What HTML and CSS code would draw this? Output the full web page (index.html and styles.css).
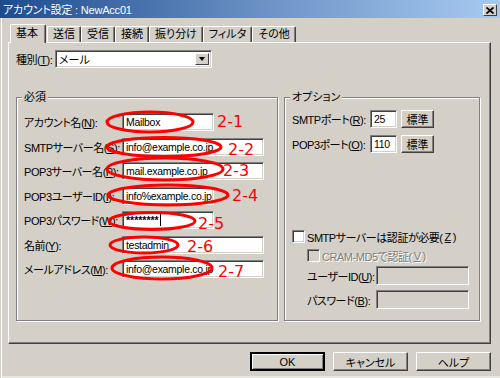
FILE: index.html
```html
<!doctype html>
<html lang="ja">
  <head>
    <meta charset="UTF-8" />
    <title>アカウント設定 : NewAcc01</title>
    <link rel="stylesheet" href="styles.css">
  </head>
  <body>
    <div class="window">
      <div class="titlebar">
        <span class="title">アカウント設定 : NewAcc01</span>
        <span class="close-btn">
          <svg width="8" height="7" viewBox="0 0 8 7"><path d="M0.5 0.5L7.5 6.5M7.5 0.5L0.5 6.5" stroke="#000" stroke-width="1.7" fill="none"/></svg>
        </span>
      </div>

      <div class="content">
        <div class="tabs">
          <span class="tab active">基本</span>
          <span class="tab">送信</span>
          <span class="tab">受信</span>
          <span class="tab">接続</span>
          <span class="tab">振り分け</span>
          <span class="tab">フィルタ</span>
          <span class="tab">その他</span>
        </div>

        <div class="panel">
          <div class="kind-row">
            <span class="kind-label">種別(<u>T</u>):</span>
            <div class="select">
              <span class="select-text">メール</span>
              <span class="select-btn"><span class="tri"></span></span>
            </div>
          </div>

          <div class="groups">
            <div class="group group-required">
              <span class="legend">必須</span>
              <div class="fields">
                <span class="lbl">アカウント名(<u>N</u>):</span>
                <span class="input short">Mailbox</span>
                <span class="lbl">SMTPサーバー名(<u>S</u>):</span>
                <span class="input long">info@example.co.jp</span>
                <span class="lbl">POP3サーバー名(<u>P</u>):</span>
                <span class="input long">mail.example.co.jp</span>
                <span class="lbl">POP3ユーザーID(<u>I</u>):</span>
                <span class="input short">info%example.co.jp</span>
                <span class="lbl">POP3パスワード(<u>W</u>):</span>
                <span class="input short"><b class="stars">********</b><i class="caret"></i></span>
                <span class="lbl">名前(<u>Y</u>):</span>
                <span class="input long">testadmin</span>
                <span class="lbl">メールアドレス(<u>M</u>):</span>
                <span class="input long">info@example.co.jp</span>
              </div>
            </div>

            <div class="group group-options">
              <span class="legend">オプション</span>
              <div class="ports">
                <span class="lbl">SMTPポート(<u>R</u>):</span>
                <span class="input port">25</span>
                <span class="btn small">標準</span>
                <span class="lbl">POP3ポート(<u>O</u>):</span>
                <span class="input port">110</span>
                <span class="btn small">標準</span>
              </div>
              <div class="check-row"><span class="check"></span>SMTPサーバーは認証が必要(<u>Z</u>)</div>
              <div class="check-row sub disabled"><span class="check"></span>CRAM-MD5で認証(<u>V</u>)</div>
              <div class="auth">
                <span class="lbl">ユーザーID(<u>U</u>):</span>
                <span class="input off"></span>
                <span class="lbl">パスワード(<u>B</u>):</span>
                <span class="input off"></span>
              </div>
            </div>
          </div>
        </div>

        <div class="buttons">
          <span class="btn default">OK</span>
          <span class="btn">キャンセル</span>
          <span class="btn">ヘルプ</span>
        </div>
      </div>

      <!-- red annotations drawn over the dialog -->
      <svg class="marks" width="500" height="378" viewBox="0 0 500 378">
        <g fill="none" stroke="#ff0000" stroke-width="3">
          <ellipse cx="150" cy="122" rx="43" ry="10"/>
          <ellipse cx="164" cy="147" rx="57" ry="9.5"/>
          <ellipse cx="165" cy="169" rx="58" ry="11"/>
          <ellipse cx="168" cy="195" rx="60" ry="10"/>
          <ellipse cx="152" cy="221" rx="43" ry="8.5"/>
          <ellipse cx="144" cy="245" rx="34" ry="8"/>
          <ellipse cx="162" cy="268" rx="50" ry="11"/>
        </g>
        <g class="mark-text" fill="#ff0000">
          <text x="217" y="127">2-1</text>
          <text x="228" y="155">2-2</text>
          <text x="223" y="176">2-3</text>
          <text x="232" y="201">2-4</text>
          <text x="198" y="229">2-5</text>
          <text x="187" y="252">2-6</text>
          <text x="218" y="277">2-7</text>
        </g>
      </svg>
    </div>
  </body>
</html>
```

FILE: styles.css
```css
body {
  margin: 0;
  font-family: 'Liberation Sans', 'Noto Sans CJK JP', sans-serif;
  font-size: 11px;
  font-feature-settings: 'palt';
  color: #000;
}
u {
  text-decoration: underline;
  text-underline-offset: 1px;
}
.window {
  position: relative;
  width: 500px;
  height: 378px;
  background: #d4d0c8;
  overflow: hidden;
  white-space: nowrap;
  box-shadow: inset 1px 0 0 #d4d0c8, inset 2px 0 0 #fff, inset 0 -2px 0 #e8e6e0;
}

/* title bar */
.titlebar {
  height: 18px;
  display: flex;
  align-items: center;
  justify-content: space-between;
  padding: 0 3px 0 3px;
  background: linear-gradient(to right, #1d4c8e, #6f95c8 55%, #a6caf0);
  color: #fff;
  font-size: 11px;
  letter-spacing: -0.2px;
}
.close-btn {
  width: 14px;
  height: 12px;
  margin-top: 2px;
  display: flex;
  align-items: center;
  justify-content: center;
  background: #d4d0c8;
  border: 1px solid;
  border-color: #fff #404040 #404040 #fff;
  box-sizing: border-box;
}

.content {
  padding: 6px 9px 0 8px;
}

/* tabs */
.tabs {
  display: flex;
  align-items: flex-end;
  height: 18px;
  padding-left: 4px;
}
.tab {
  height: 15px;
  line-height: 14px;
  padding: 0 5px;
  border: 1px solid;
  border-color: #fff #404040 transparent #fff;
  border-bottom: none;
  border-radius: 2px 2px 0 0;
  box-shadow: inset -1px 0 0 #808080;
}
.tab.active {
  position: relative;
  height: 18px;
  line-height: 16px;
  margin: 0 -1px -1px -2px;
  padding: 0 7px 0 5px;
  background: #d4d0c8;
  z-index: 1;
}
.tab.active + .tab {
  margin-left: 2px;
}

/* tab page */
.panel {
  height: 302px;
  box-sizing: border-box;
  padding: 7px 10px 0 7px;
  border: 1px solid;
  border-color: #fff #404040 #404040 #fff;
  box-shadow: inset -1px -1px 0 #808080;
}
.lbl,
.kind-label,
.check-row {
  letter-spacing: -0.45px;
}
.kind-row {
  display: flex;
  align-items: center;
  height: 18px;
}
.kind-label {
  width: 39px;
}
.select {
  width: 157px;
  height: 18px;
  box-sizing: border-box;
  display: flex;
  align-items: center;
  justify-content: space-between;
  background: #fff;
  border: 1px solid;
  border-color: #808080 #fff #fff #808080;
  box-shadow: inset 1px 1px 0 #404040, inset -1px -1px 0 #d4d0c8;
  padding: 2px 2px 2px 3px;
}
.select-btn {
  width: 14px;
  height: 12px;
  box-sizing: border-box;
  display: flex;
  align-items: center;
  justify-content: center;
  background: #d4d0c8;
  border: 1px solid;
  border-color: #fff #404040 #404040 #fff;
}
.tri {
  width: 0;
  height: 0;
  border-left: 3.5px solid transparent;
  border-right: 3.5px solid transparent;
  border-top: 4px solid #000;
}

/* group boxes */
.groups {
  display: flex;
  gap: 6px;
  margin-top: 29px;
}
.group {
  height: 224px;
  box-sizing: border-box;
  padding: 0 7px;
  border: 1px solid #808080;
  box-shadow: inset 1px 1px 0 #fff, 1px 1px 0 #fff;
}
.group-required {
  width: 262px;
}
.group-options {
  width: 196px;
}
.legend {
  display: block;
  width: fit-content;
  margin: -8px 0 0 -2px;
  padding: 0 2px;
  line-height: 14px;
  background: #d4d0c8;
}
.fields {
  display: grid;
  grid-template-columns: 98px auto;
  grid-auto-rows: 18px;
  align-items: center;
  row-gap: 6.5px;
  margin-top: 9px;
}
.input {
  height: 18px;
  box-sizing: border-box;
  display: flex;
  align-items: center;
  padding-left: 3px;
  background: #fff;
  border: 1px solid;
  border-color: #808080 #fff #fff #808080;
  box-shadow: inset 1px 1px 0 #404040, inset -1px -1px 0 #d4d0c8;
  font-size: 10.5px;
  letter-spacing: -0.3px;
  overflow: hidden;
}
.input.short {
  width: 92px;
}
.input.long {
  width: 142px;
}
.stars {
  font-weight: bold;
  letter-spacing: 0;
}
.caret {
  width: 1px;
  height: 12px;
  margin-left: 1px;
  background: #000;
}

.ports {
  display: grid;
  grid-template-columns: 73px 26px auto;
  grid-auto-rows: 18px;
  align-items: center;
  column-gap: 5px;
  row-gap: 7px;
  margin-top: 6px;
}
.input.port {
  width: 27px;
}
.input.off {
  width: 93px;
  height: 19px;
  background: #d4d0c8;
}
.check-row {
  display: flex;
  align-items: center;
  gap: 2px;
  height: 13px;
  margin-top: 77px;
}
.check {
  flex: none;
  width: 13px;
  height: 13px;
  box-sizing: border-box;
  background: #fff;
  border: 1px solid;
  border-color: #808080 #fff #fff #808080;
  box-shadow: inset 1px 1px 0 #404040, inset -1px -1px 0 #d4d0c8;
}
.check-row.sub {
  margin: 6px 0 0 15px;
}
.disabled {
  color: #808080;
  text-shadow: 1px 1px 0 #fff;
}
.disabled .check {
  background: #d4d0c8;
}
.auth {
  display: grid;
  grid-template-columns: 69px auto;
  grid-auto-rows: 19px;
  align-items: center;
  row-gap: 5px;
  margin: 4px 0 0 15px;
}

/* buttons */
.btn {
  display: flex;
  align-items: center;
  justify-content: center;
  box-sizing: border-box;
  background: #d4d0c8;
  border: 1px solid;
  border-color: #fff #404040 #404040 #fff;
  box-shadow: inset -1px -1px 0 #808080;
}
.btn.small {
  width: 33px;
  height: 18px;
}
.buttons {
  display: flex;
  justify-content: flex-end;
  gap: 8px;
  margin-top: 8px;
}
.buttons .btn {
  width: 75px;
  height: 19px;
}
.btn.default {
  border: 2px solid;
  border-color: #000;
  box-shadow: inset 1px 1px 0 #fff, inset -1px -1px 0 #808080;
}

/* red annotation overlay */
.marks {
  position: absolute;
  left: 0;
  top: 0;
  pointer-events: none;
}
.mark-text {
  font-family: 'DejaVu Sans', sans-serif;
  font-size: 16px;
}
```
